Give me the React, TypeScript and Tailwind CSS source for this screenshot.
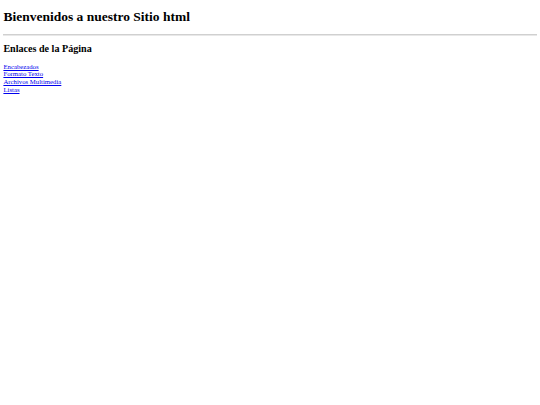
import React from 'react';

const links = ['Encabezados', 'Formato Texto', 'Archivos Multimedia', 'Listas'];

export default function App() {
  return (
    <div className="min-h-[405px] bg-white px-[3.4px] pt-[9px] text-black font-['Liberation_Serif',serif]">
      <h1 className="my-0 text-[13.5px] leading-[15.5px] font-bold">Bienvenidos a nuestro Sitio html</h1>
      <hr className="mt-[9px] mb-0 h-[2px] border-0 border-t border-t-[#d0d0d0] bg-[#e8e8e8]" />
      <h2 className="mt-[7.6px] text-[10.1px] leading-[11.6px] font-bold">Enlaces de la Página</h2>
      <p className="mt-[7.9px] text-[6.75px] leading-[7.7px]">
        {links.map((l) => (
          <React.Fragment key={l}>
            <a href="#" className="text-[#0000ee] underline">
              {l}
            </a>
            <br />
          </React.Fragment>
        ))}
      </p>
    </div>
  );
}
